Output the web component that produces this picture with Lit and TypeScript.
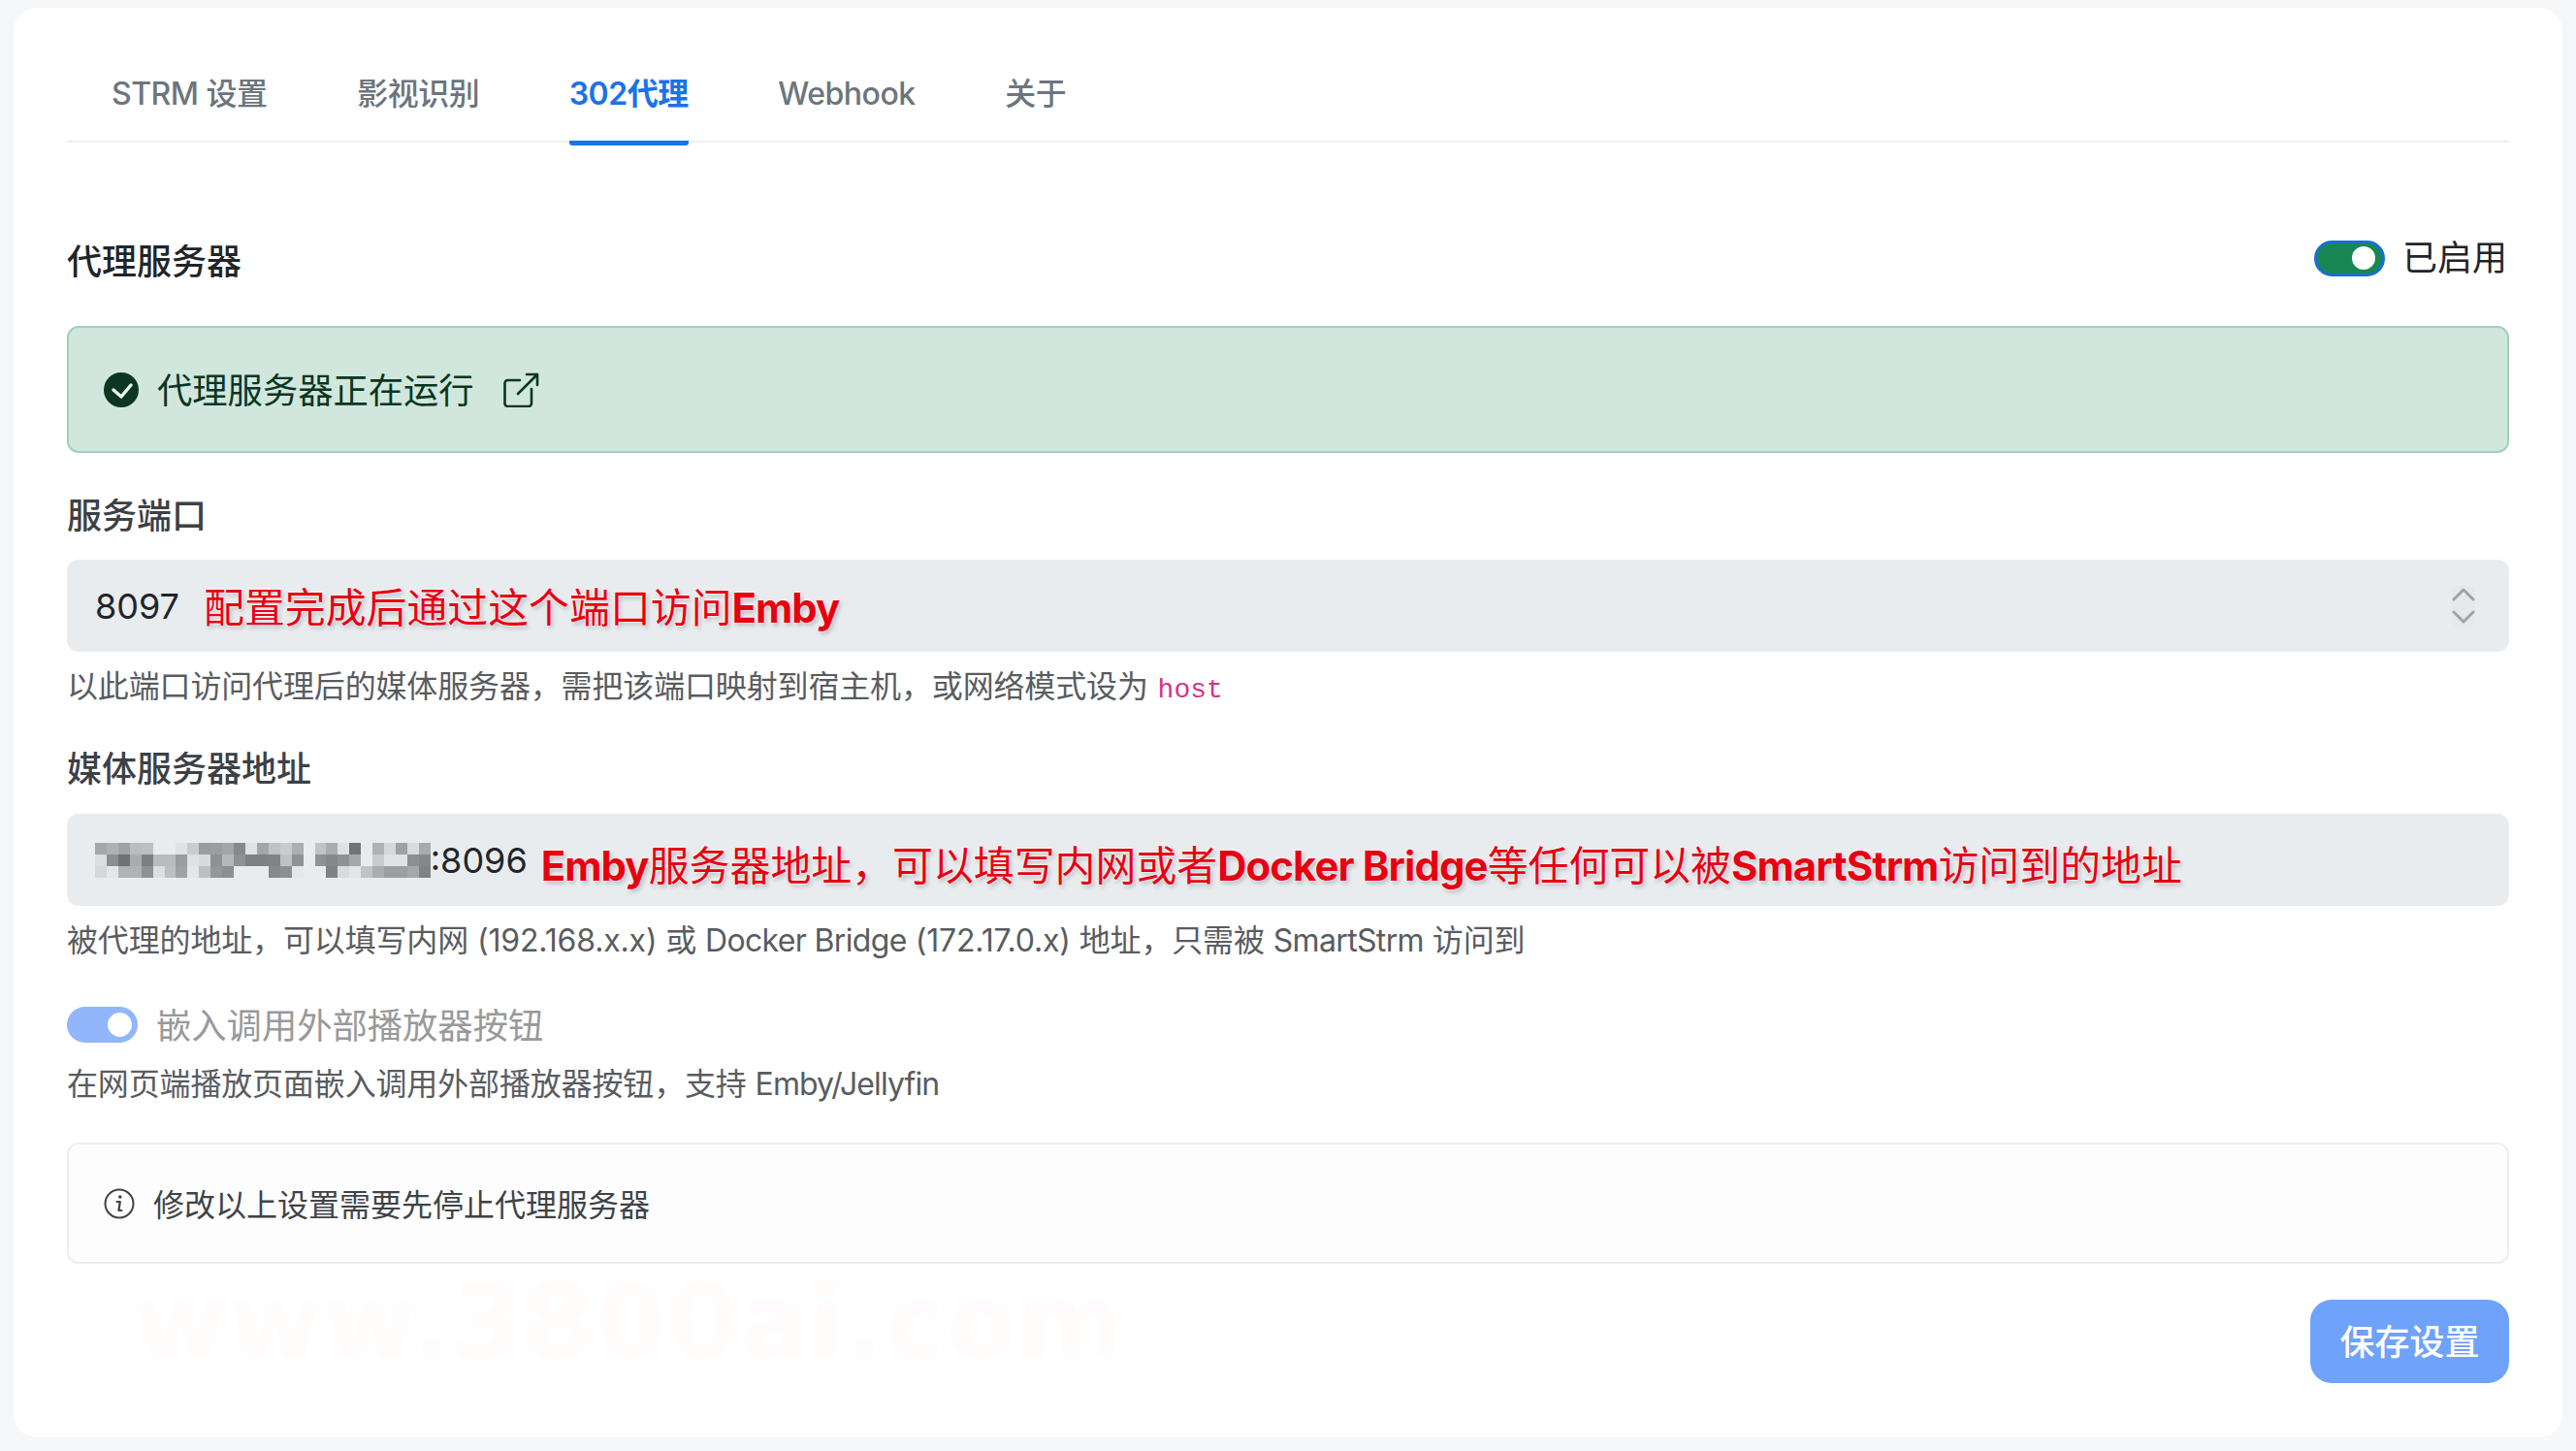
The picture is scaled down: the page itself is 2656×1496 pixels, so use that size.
import { LitElement, html, css } from "lit";
import { customElement } from "lit/decorators.js";

const E = "e9ecef";
const PIX = [
  `a5a6aa,b0b1b5,9fa3a5,b9bdbf,bcbec1,${E},${E},dfe1e4,c9cbce,9a9c9f,9a9fa0,a3a6a8,86888c,dfe1e4,a4a5a9,bfc1c5,c9cbce,adaeb2,${E},c0c4c6,a9adaf,dfe1e4,707276,${E},b0b1b5,d5d7da,a0a1a5,d8dadd,a9aaae`,
  `dcdee1,8c8e92,6e7275,a9acae,7d7f83,b9bbbe,b9bbbe,9a9c9f,dfe1e4,d8dadd,8e9093,b5b9bb,8f9195,7e8084,7e8084,808286,bfc1c5,8f9195,${E},8f9195,85878b,8f9195,a5a7ab,${E},c9cbce,dfe1e4,dfe1e4,8d8f93,85878b`,
  `d5d7da,e4e6e9,b0b2b5,b0b2b5,8f9195,dcdee1,bcbec1,9fa1a4,e4e6e9,bcc0c2,94979a,8c8f91,${E},${E},${E},87898d,8c8e92,e4e6e9,${E},${E},7f8185,d8dadd,e2e4e7,c0c2c5,aaacaf,9c9ea1,9c9ea1,a5a7aa,808286`,
];

@customElement("app-root")
export class AppRoot extends LitElement {
  static styles = css`
    :host {
      display: block;
      box-sizing: border-box;
      height: 1496px;
      padding: 8px 14px 14px;
      background: #f6f7f9;
      font-family: "Inter", "Noto Sans CJK SC", sans-serif;
      color: #212529;
    }
    .card {
      position: relative;
      box-sizing: border-box;
      height: 1474px;
      padding: 0 55px;
      background: #fff;
      border-radius: 24px;
    }
    .tabs {
      display: flex;
      gap: 92.6px;
      box-sizing: border-box;
      height: 139px;
      padding: 0 46px;
      border-bottom: 2px solid #eef0f2;
    }
    .tab {
      box-sizing: border-box;
      height: 142px;
      padding-top: 66px;
      line-height: 46px;
      font-size: 32px;
      font-weight: 500;
      letter-spacing: -0.5px;
      color: #6c757d;
      white-space: nowrap;
    }
    .tab.active {
      color: #1a73e8;
      font-weight: 600;
      border-bottom: 5px solid #1a73e8;
      border-radius: 0 0 3px 3px;
    }
    .head {
      display: flex;
      justify-content: space-between;
      align-items: flex-start;
      height: 48px;
      margin-top: 99px;
    }
    .title {
      font-size: 36px;
      line-height: 48px;
      font-weight: 500;
    }
    .sw-row {
      display: flex;
      align-items: center;
      gap: 18px;
      padding-right: 2px;
      height: 40px;
      font-size: 36px;
      line-height: 40px;
    }
    .switch {
      position: relative;
      box-sizing: border-box;
      flex: none;
      width: 73px;
      height: 37px;
      border-radius: 19px;
    }
    .switch i {
      position: absolute;
      top: 50%;
      width: 24px;
      height: 24px;
      margin-top: -12px;
      right: 7px;
      border-radius: 50%;
      background: #fff;
    }
    .switch.on {
      background: #198754;
      border: 3px solid #1a6fd0;
    }
    .switch.dis {
      background: #91b6fb;
    }
    .switch.dis i {
      right: 6px;
      width: 25px;
      height: 25px;
      margin-top: -12.5px;
    }
    .alert {
      display: flex;
      align-items: center;
      box-sizing: border-box;
      height: 131px;
      margin-top: 42px;
      padding-left: 36px;
      background: #d1e7dd;
      border: 2px solid #a3cfbb;
      border-radius: 12px;
      color: #0a3622;
      font-size: 36.3px;
    }
    .alert .txt {
      margin: 0 30px 0 19px;
      padding-bottom: 4px;
    }
    .label {
      margin-top: 41px;
      font-size: 36px;
      line-height: 48px;
      font-weight: 500;
      color: #3c4146;
    }
    .label.second {
      margin-top: 39px;
    }
    .input {
      position: relative;
      display: flex;
      align-items: center;
      box-sizing: border-box;
      height: 95px;
      margin-top: 21px;
      padding-left: 29px;
      background: #e9ecef;
      border-radius: 12px;
      font-size: 36px;
      white-space: nowrap;
    }
    .label.second + .input {
      margin-top: 22px;
    }
    .note {
      color: #e60012;
      font-size: 41.9px;
      font-weight: 400;
      margin-left: 25px;
      padding-bottom: 2px;
      text-shadow: 0 0 2px #fff, 0 0 2px #fff, 2px 3px 4px rgba(0, 0, 0, 0.2);
    }
    .note.addr {
      margin-left: 14px;
      padding: 6px 0 0;
    }
    .note b {
      font-weight: 700;
      letter-spacing: -1px;
    }
    .note.addr b {
      letter-spacing: -0.9px;
    }
    .spin {
      position: absolute;
      right: 35px;
      top: 26px;
      display: block;
      background: rgba(0, 0, 0, 0.012);
      border-radius: 6px;
    }
    .help {
      height: 44px;
      margin-top: 14px;
      font-size: 32px;
      line-height: 44px;
      letter-spacing: -0.15px;
      color: #595c5f;
      white-space: nowrap;
    }
    .help.after-toggle {
      margin-top: 21px;
    }
    .help .l {
      letter-spacing: -0.65px;
    }
    .help .t {
      letter-spacing: -0.9px;
    }
    code {
      font-family: "Liberation Mono", monospace;
      font-size: 28px;
      line-height: 1;
      letter-spacing: 0;
      margin-left: 1px;
      color: #d63384;
    }
    .pix {
      display: grid;
      grid-template-columns: repeat(29, 11.93px);
      grid-auto-rows: 12px;
      flex: none;
      filter: blur(0.7px);
    }
    .embed {
      display: flex;
      align-items: center;
      gap: 19px;
      height: 37px;
      margin-top: 46px;
      font-size: 36.3px;
      color: #98999b;
    }
    .embed span {
      padding-bottom: 4px;
    }
    .info {
      display: flex;
      align-items: center;
      box-sizing: border-box;
      height: 125px;
      margin-top: 38px;
      padding-left: 36px;
      gap: 19px;
      background: #fdfdfe;
      border: 2px solid #eceef0;
      border-radius: 12px;
      font-size: 32px;
      color: #3f4347;
    }
    .info span {
      padding-bottom: 2px;
    }
    .foot {
      display: flex;
      justify-content: flex-end;
      margin-top: 37px;
    }
    .save {
      box-sizing: border-box;
      width: 205px;
      height: 86px;
      padding: 0 0 4px;
      border: 0;
      border-radius: 22px;
      background: #6ea2fb;
      color: #fff;
      font: 500 36px "Inter", "Noto Sans CJK SC", sans-serif;
    }
    .mark {
      position: absolute;
      left: 124px;
      top: 1290px;
      font-family: "DejaVu Sans", sans-serif;
      font-weight: 700;
      font-size: 104px;
      line-height: 130px;
      letter-spacing: 1.7px;
      color: #fffcfb;
      white-space: nowrap;
    }
  `;

  private tabs = ["STRM 设置", "影视识别", "302代理", "Webhook", "关于"];

  render() {
    return html`
      <div class="card">
        <div class="mark">www.3800ai.com</div>
        <nav class="tabs">
          ${this.tabs.map(
            (t, i) => html`<div class="tab ${i === 2 ? "active" : ""}">${t}</div>`
          )}
        </nav>
        <div class="head">
          <div class="title">代理服务器</div>
          <div class="sw-row">
            <div class="switch on"><i></i></div>
            <span>已启用</span>
          </div>
        </div>
        <div class="alert">
          <svg width="36" height="36" viewBox="0 0 36 36">
            <circle cx="18" cy="18" r="18" fill="#0a3622" />
            <path d="M10 18l8 7 10-12" fill="none" stroke="#e8f3ee" stroke-width="3.5" stroke-linecap="round" stroke-linejoin="round" />
          </svg>
          <span class="txt">代理服务器正在运行</span>
          <svg width="37" height="36" viewBox="0 0 37 36" fill="none" stroke="#0a3622" stroke-width="2.6" stroke-linecap="round" stroke-linejoin="round">
            <path d="M17 8H4.5a3 3 0 0 0-3 3v21a3 3 0 0 0 3 3H26a3 3 0 0 0 3-3V17" />
            <path d="M15 22L35 2M24 2h11v11" />
          </svg>
        </div>

        <div class="label">服务端口</div>
        <div class="input">
          <span>8097</span>
          <span class="note">配置完成后通过这个端口访问<b>Emby</b></span>
          <svg class="spin" width="24" height="44" viewBox="0 0 24 44" fill="none" stroke="#a2a3a5" stroke-width="3" stroke-linecap="round" stroke-linejoin="round">
            <path d="M2 15L12 5l10 10M2 28l10 10 10-10" />
          </svg>
        </div>
        <div class="help">
          以此端口访问代理后的媒体服务器，需把该端口映射到宿主机，或网络模式设为 <code>host</code>
        </div>

        <div class="label second">媒体服务器地址</div>
        <div class="input">
          <div class="pix">
            ${PIX.flatMap((r) => r.split(",")).map(
              (c) => html`<span style="background:#${c}"></span>`
            )}
          </div>
          <span>:8096</span>
          <span class="note addr"><b>Emby</b>服务器地址，可以填写内网或者<b>Docker Bridge</b>等任何可以被<b>SmartStrm</b>访问到的地址</span>
        </div>
        <div class="help">
          被代理的地址，可以填写内网 (192.168.x.x) 或 <span class="l">Docker Bridge</span> (172.17.0.x) 地址，只需被 <span class="l">SmartStrm</span> 访问到
        </div>

        <div class="embed">
          <div class="switch dis"><i></i></div>
          <span>嵌入调用外部播放器按钮</span>
        </div>
        <div class="help after-toggle">
          在网页端播放页面嵌入调用外部播放器按钮，支持 <span class="t">Emby/Jellyfin</span>
        </div>

        <div class="info">
          <svg width="32" height="32" viewBox="0 0 32 32" fill="none" stroke="#3f4347" stroke-width="2">
            <circle cx="16" cy="16" r="14.5" />
            <path d="M13.6 14h3.2l-1.4 9h3" stroke-width="2.2" stroke-linecap="round" stroke-linejoin="round" />
            <circle cx="16.8" cy="9" r="1.8" fill="#3f4347" stroke="none" />
          </svg>
          <span>修改以上设置需要先停止代理服务器</span>
        </div>

        <div class="foot"><button class="save">保存设置</button></div>
      </div>
    `;
  }
}
